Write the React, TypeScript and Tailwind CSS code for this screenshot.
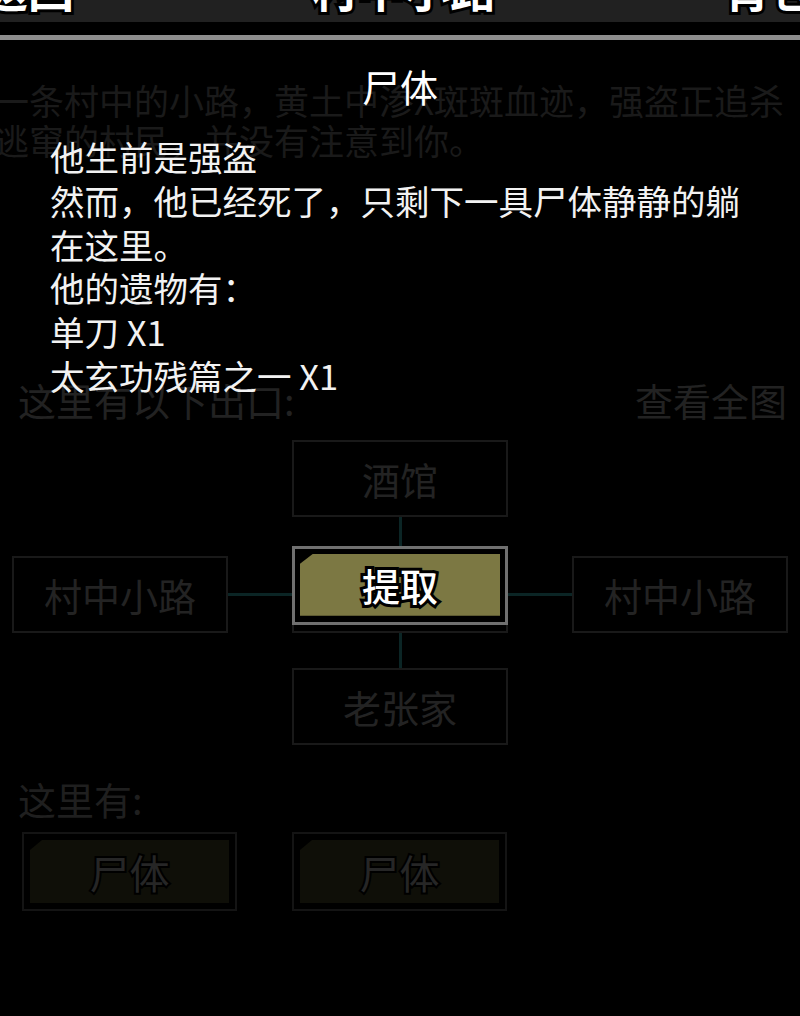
import React from 'react';

const exits = {
  top: '酒馆',
  left: '村中小路',
  right: '村中小路',
  bottom: '老张家',
};

const loot = ['单刀 X1', '太玄功残篇之一 X1'];

const MapNode = ({ label }: { label: string }) => (
  <div className="h-[77px] border-2 border-[#191919] flex items-center justify-center text-[38px] leading-none text-[#232323]">
    {label}
  </div>
);

const DimButton = ({ label }: { label: string }) => (
  <div className="w-[215px] h-[79px] border-2 border-[#141414] p-[6px]">
    <div className="h-full bg-[#0f0f08] [clip-path:polygon(12px_0,100%_0,100%_100%,0_100%,0_10px)] flex items-center justify-center text-[40px] leading-none text-[#262626] [-webkit-text-stroke:4px_#000] [paint-order:stroke_fill]">
      {label}
    </div>
  </div>
);

export default function App() {
  return (
    <div className="w-[800px] h-[1016px] bg-black overflow-hidden font-['Noto_Sans_CJK_SC','Noto_Sans',sans-serif]">
      {/* top bar, mostly scrolled out of view */}
      <div className="h-[22px] bg-[#212121] overflow-hidden">
        <div className="-mt-[36px] flex justify-between items-start text-[46px] leading-none text-white font-bold [-webkit-text-stroke:6px_#000] [paint-order:stroke_fill]">
          <span className="-ml-[18px]">返回</span>
          <span className="ml-[10px]">村中小路</span>
          <span className="-mr-[16px]">背包</span>
        </div>
      </div>
      <div className="h-[13px] bg-black" />
      <div className="h-[5px] bg-[#8e8e8e]" />

      <div className="relative h-[976px]">
        {/* game screen behind the dialog */}
        <div className="pt-[40px]">
          <p className="text-[35px] leading-[40px] text-[#1a1a1a] -ml-[6px] whitespace-nowrap">
            一条村中的小路，黄土中渗X斑斑血迹，强盗正追杀
            <br />
            逃窜的村民，并没有注意到你。
          </p>

          <div className="mt-[218px] flex justify-between items-center pl-[18px] pr-[13px] text-[38px] leading-[44px] text-[#222222]">
            <span>这里有以下出口:</span>
            <span>查看全图</span>
          </div>

          <div className="mt-[18px] pl-[12px] grid grid-cols-[216px_64px_216px_64px_216px]">
            <div />
            <div />
            <MapNode label={exits.top} />
            <div />
            <div />

            <div className="col-start-3 h-[39px] flex justify-center">
              <div className="w-[3px] bg-[#0b2525]" />
            </div>
            <div className="col-span-2" />

            <MapNode label={exits.left} />
            <div className="flex items-center">
              <div className="h-[3px] w-full bg-[#0b2525]" />
            </div>
            <MapNode label="村中小路" />
            <div className="flex items-center">
              <div className="h-[3px] w-full bg-[#0b2525]" />
            </div>
            <MapNode label={exits.right} />

            <div className="col-start-3 h-[35px] flex justify-center">
              <div className="w-[3px] bg-[#0b2525]" />
            </div>
            <div className="col-span-2" />

            <div className="col-start-3">
              <MapNode label={exits.bottom} />
            </div>
          </div>

          <div className="mt-[32px] pl-[18px] text-[38px] leading-[44px] text-[#1f1f1f]">这里有:</div>
          <div className="mt-[11px] pl-[22px] flex gap-[55px]">
            <DimButton label="尸体" />
            <DimButton label="尸体" />
          </div>
        </div>

        {/* corpse dialog */}
        <div className="absolute inset-0 pt-[24px]">
          <h2 className="text-center text-[38px] leading-[44px] text-white">尸体</h2>
          <div className="mt-[27px] pl-[50px] pr-[50px] text-[34.5px] leading-[43.8px] text-[#f2f2f2]">
            <p>他生前是强盗</p>
            <p>然而，他已经死了，只剩下一具尸体静静的躺在这里。</p>
            <p>他的遗物有：</p>
            {loot.map(item => (
              <p key={item}>{item}</p>
            ))}
          </div>

          <div className="mt-[148px] ml-[292px] w-[216px] h-[79px] border-[3px] border-[#707070] bg-black pt-[5px] pb-[6px] px-[5px]">
            <button className="w-full h-full bg-[#7c7843] [clip-path:polygon(13px_0,100%_0,100%_100%,0_100%,0_10px)] flex items-center justify-center text-[38px] leading-none font-medium text-white [-webkit-text-stroke:6px_#000] [paint-order:stroke_fill]">
              提取
            </button>
          </div>
        </div>
      </div>
    </div>
  );
}
